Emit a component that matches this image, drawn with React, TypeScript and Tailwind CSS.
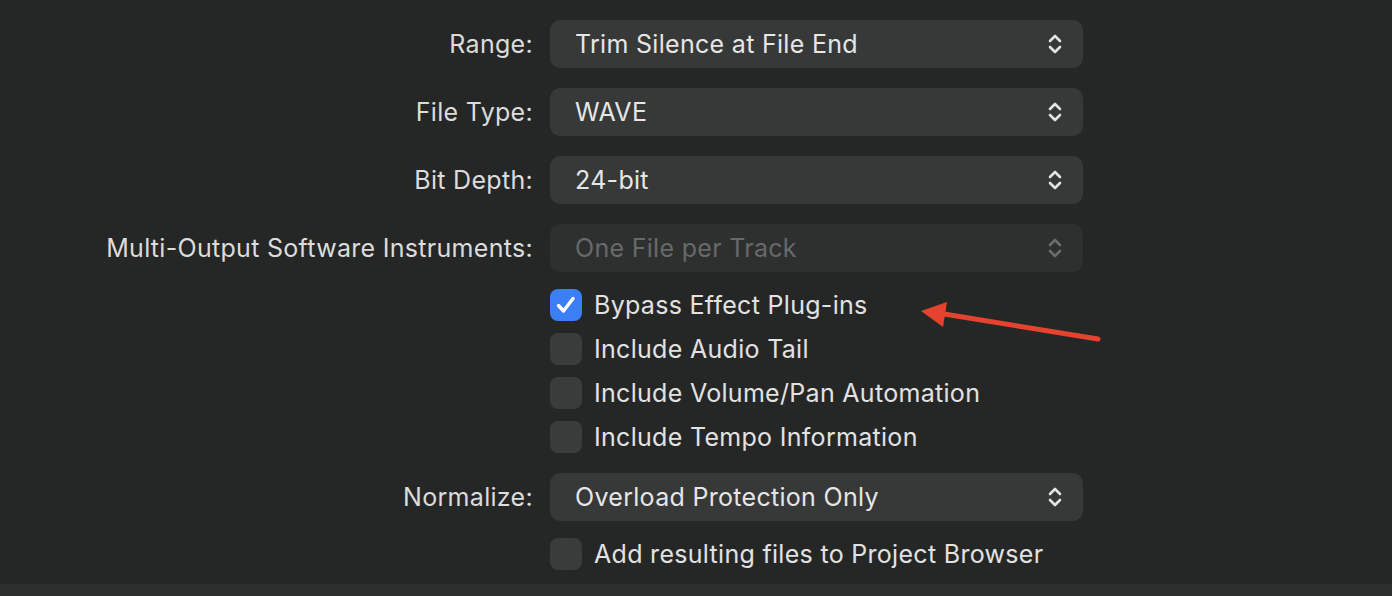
import type React from "react";

const Chevrons: React.FC<{ dim?: boolean }> = ({ dim }) => (
  <svg
    width="16"
    height="22"
    viewBox="0 0 16 22"
    fill="none"
    stroke={dim ? "#6b6c6c" : "#e4e4e4"}
    strokeWidth="2.6"
    strokeLinecap="round"
    strokeLinejoin="round"
  >
    <path d="M3 8 L8 3 L13 8" />
    <path d="M3 14 L8 19 L13 14" />
  </svg>
);

const Select: React.FC<{ value: string; disabled?: boolean }> = ({
  value,
  disabled,
}) => (
  <div
    className={`flex h-12 w-[533px] items-center justify-between rounded-[10px] pl-[25px] pr-[20px] ${
      disabled ? "bg-[#2e2f2f] text-[#686969]" : "bg-[#373838] text-[#e6e6e6]"
    }`}
  >
    <span>{value}</span>
    <Chevrons dim={disabled} />
  </div>
);

const Row: React.FC<{ label: string; value: string; disabled?: boolean }> = ({
  label,
  value,
  disabled,
}) => (
  <div className="flex items-center gap-[17px]">
    <div className="w-[533px] text-right text-[#dcdcdc]">{label}</div>
    <Select value={value} disabled={disabled} />
  </div>
);

const Check: React.FC<{ label: string; checked?: boolean }> = ({
  label,
  checked,
}) => (
  <div className="flex h-8 items-center gap-3 pl-[550px]">
    <div
      className={`flex h-8 w-8 items-center justify-center rounded-[8px] ${
        checked ? "bg-[#3c7ff4]" : "bg-[#3a3b3b]"
      }`}
    >
      {checked && (
        <svg width="24" height="24" viewBox="0 0 24 24" fill="none">
          <path
            d="M4.5 12.5 L9.5 18 L19 5.5"
            stroke="#fff"
            strokeWidth="3.4"
            strokeLinecap="round"
            strokeLinejoin="round"
          />
        </svg>
      )}
    </div>
    <span className="text-[#e2e2e2]">{label}</span>
  </div>
);

export default function App() {
  return (
    <div
      className="relative h-[596px] w-[1392px] overflow-hidden bg-[#252727] text-[25px] leading-none tracking-[0.3px]"
      style={{ fontFamily: "Inter, 'Noto Sans', sans-serif" }}
    >
      <div className="flex h-[584px] flex-col pt-5">
        <div className="flex flex-col gap-5">
          <Row label="Range:" value="Trim Silence at File End" />
          <Row label="File Type:" value="WAVE" />
          <Row label="Bit Depth:" value="24-bit" />
          <Row
            label="Multi-Output Software Instruments:"
            value="One File per Track"
            disabled
          />
        </div>
        <div className="mt-[17px] flex flex-col gap-3">
          <Check label="Bypass Effect Plug-ins" checked />
          <Check label="Include Audio Tail" />
          <Check label="Include Volume/Pan Automation" />
          <Check label="Include Tempo Information" />
        </div>
        <div className="mt-5">
          <Row label="Normalize:" value="Overload Protection Only" />
        </div>
        <div className="mt-[17px]">
          <Check label="Add resulting files to Project Browser" />
        </div>
      </div>
      <div className="h-3 bg-[#2c2d2d]" />

      {/* annotation arrow */}
      <svg
        className="pointer-events-none absolute left-0 top-0"
        width="1392"
        height="596"
      >
        <line
          x1="1098"
          y1="339"
          x2="938"
          y2="313"
          stroke="#e5432e"
          strokeWidth="5"
          strokeLinecap="round"
        />
        <polygon points="921,311 947,302 943,327" fill="#e5432e" />
      </svg>
    </div>
  );
}
